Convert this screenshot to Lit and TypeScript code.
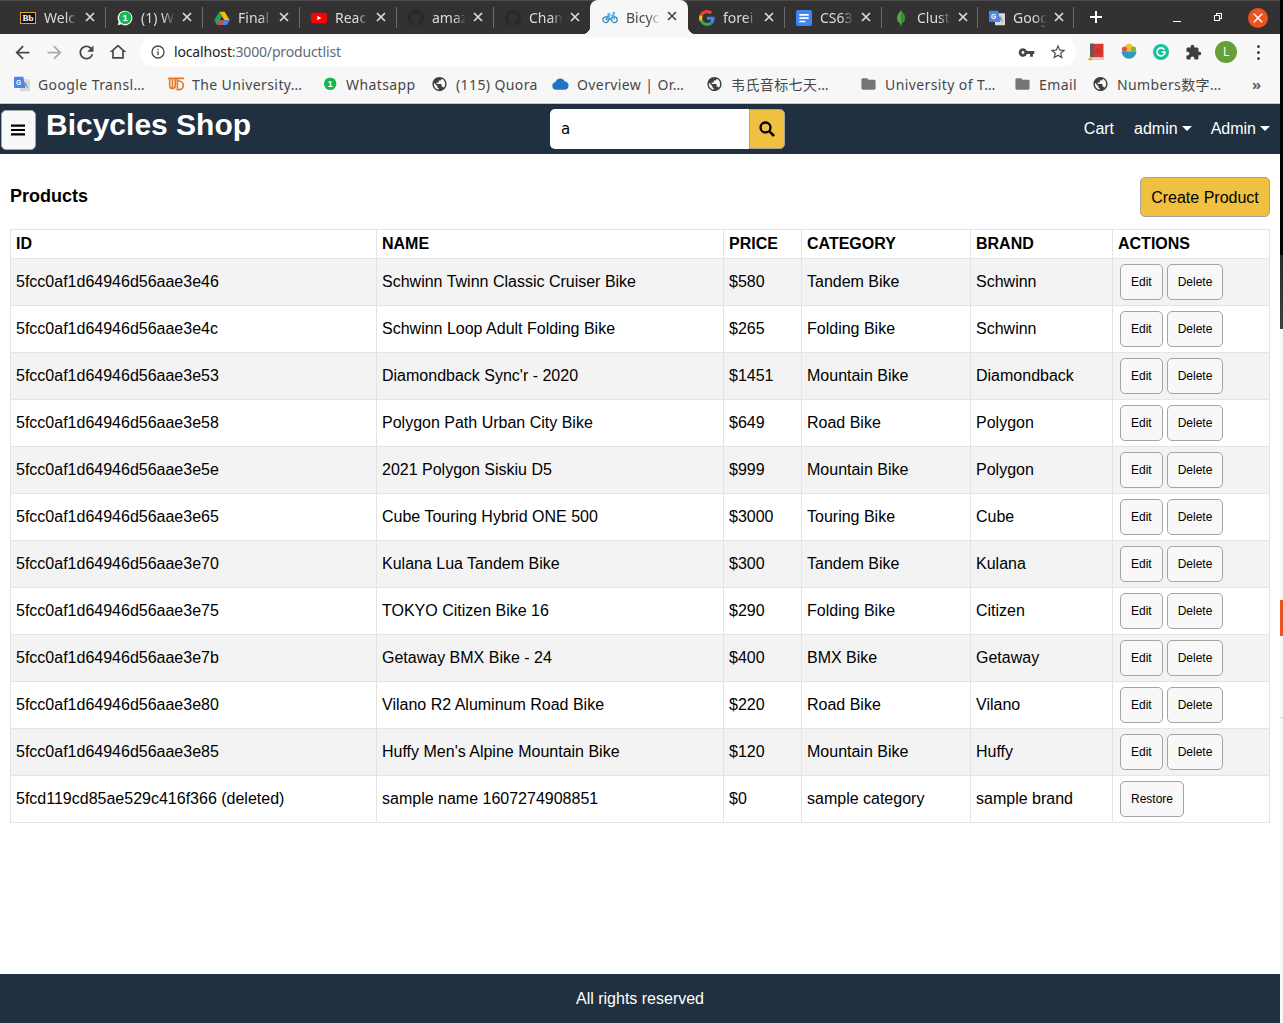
import { LitElement, css, html, svg } from 'lit';
import { customElement } from 'lit/decorators.js';

const GLOBE = 'M12 2C6.48 2 2 6.48 2 12s4.48 10 10 10 10-4.48 10-10S17.52 2 12 2zm-1 17.93c-3.95-.49-7-3.85-7-7.93 0-.62.08-1.21.21-1.79L9 15v1c0 1.1.9 2 2 2v1.93zm6.9-2.54c-.26-.81-1-1.39-1.9-1.39h-1v-3c0-.55-.45-1-1-1H8v-2h2c.55 0 1-.45 1-1V7h2c1.1 0 2-.9 2-2v-.41c2.93 1.19 5 4.06 5 7.41 0 2.08-.8 3.97-2.1 5.39z';
const GITHUB = 'M12 .3a12 12 0 0 0-3.8 23.38c.6.11.82-.26.82-.58v-2.03c-3.34.72-4.04-1.61-4.04-1.61-.55-1.39-1.34-1.76-1.34-1.76-1.09-.74.08-.73.08-.73 1.2.09 1.84 1.24 1.84 1.24 1.07 1.83 2.81 1.3 3.5 1 .1-.78.42-1.31.76-1.61-2.67-.3-5.47-1.33-5.47-5.93 0-1.31.47-2.38 1.24-3.22-.14-.3-.54-1.52.1-3.18 0 0 1-.32 3.3 1.23a11.5 11.5 0 0 1 6 0c2.28-1.55 3.29-1.23 3.29-1.23.64 1.66.24 2.88.12 3.18a4.65 4.65 0 0 1 1.23 3.22c0 4.61-2.8 5.63-5.48 5.92.42.36.81 1.1.81 2.22v3.29c0 .32.22.7.82.58A12 12 0 0 0 12 .3z';

const icon = (body: unknown, size = 16, box = 24) =>
  html`<svg width=${size} height=${size} viewBox="0 0 ${box} ${box}">${body}</svg>`;

const whatsappIcon = (size: number) => icon(svg`
  <path d="M12 1a11 11 0 0 0-9.4 16.7L1 23l5.5-1.5A11 11 0 1 0 12 1z" fill="#fff"/>
  <circle cx="12.3" cy="11.7" r="9.4" fill="#12b94c"/>
  <text x="12.3" y="16.6" font-size="14" font-weight="700" text-anchor="middle" fill="#fff" font-family="Liberation Sans">1</text>`, size);

const translateIcon = () => icon(svg`
  <rect x="9" y="5" width="15" height="18" rx="1" fill="#d9d9d9"/>
  <path d="M16.5 10.5l1.6 4.2h-3.2zM12.5 18l3-7.6h2l3 7.6" fill="none" stroke="#8a8f98" stroke-width="1.4"/>
  <path d="M2 1h12l3 17H2a2 2 0 0 1-2-2V3a2 2 0 0 1 2-2z" fill="#4a86e8"/>
  <text x="7" y="13" font-size="10" font-weight="700" text-anchor="middle" fill="#fff" font-family="Liberation Sans">G</text>`);

const tabIcons: Record<string, () => unknown> = {
  bb: () => html`<span class="bb">Bb</span>`,
  whatsapp: () => whatsappIcon(16),
  drive: () => icon(svg`
    <path d="M8 2.5h8l7.5 13h-8z" fill="#fbbc04"/>
    <path d="M8 2.5 .5 15.5l4 7 7.5-13z" fill="#1fa463"/>
    <path d="M4.5 22.500h15l4-7h-15z" fill="#4285f4"/>
    <path d="M8.500 15.500h7l-3.500 7h-7.500z" fill="#ea4335" opacity=".9"/>`),
  youtube: () => icon(svg`
    <rect x="0" y="4" width="24" height="16" rx="4" fill="#f00"/>
    <path d="M9.500 8.500v7l6-3.500z" fill="#fff"/>`),
  github: () => icon(svg`<path d=${GITHUB} fill="#24292e"/>`),
  bike: () => icon(svg`
    <g fill="none" stroke="#3a7fb0" stroke-width="1.800">
      <circle cx="5.500" cy="16" r="4.300"/>
      <circle cx="18.500" cy="16" r="4.300"/>
    </g>
    <path d="M5.500 16 9.500 9h8l1 7M9.500 9l3 7h-7M12.500 16l5-7M16 5.500h2.500l-1 3.500M8 7h3.500" fill="none" stroke="#35a7ea" stroke-width="1.800"/>`),
  google: () => icon(svg`
    <path d="M23.500 12.300c0-.9-.1-1.600-.2-2.300H12v4.500h6.500c-.3 1.500-1.100 2.700-2.400 3.600l3.700 2.900c2.200-2 3.700-5 3.700-8.700z" fill="#4285f4"/>
    <path d="M12 24c3.200 0 6-1.100 7.900-2.900l-3.700-2.900c-1 .7-2.400 1.200-4.200 1.200-3.100 0-5.800-2.100-6.700-5l-3.900 3C3.400 21.300 7.400 24 12 24z" fill="#34a853"/>
    <path d="M5.300 14.400A7.300 7.300 0 0 1 5.300 9.600l-3.900-3a12 12 0 0 0 0 10.800z" fill="#fbbc05"/>
    <path d="M12 4.700c1.800 0 3.300.6 4.600 1.800L20 3.100C18 1.200 15.200 0 12 0 7.400 0 3.400 2.700 1.400 6.600l3.900 3c.9-2.800 3.600-4.900 6.700-4.900z" fill="#ea4335"/>`),
  docs: () => icon(svg`
    <rect x="0" y="0" width="24" height="24" rx="3" fill="#4285f4"/>
    <path d="M5 6h14v2.500H5zM5 11h14v2.500H5zM5 16h9v2.500H5z" fill="#fff"/>`),
  mongo: () => icon(svg`
    <path d="M12 0c-1 3-6 6.500-6 12 0 5 3.500 7.500 5 8.500l.5 3.500h1l.500-3.500c1.500-1 5-3.500 5-8.500 0-5.500-5-9-6-12z" fill="#4faa41"/>
    <path d="M12 0v24h.5l.5-3.500c1.500-1 5-3.500 5-8.500 0-5.500-5-9-6-12z" fill="#3d8b37"/>`),
  translate: translateIcon,
};

const TABS = [
  { icon: 'bb', title: 'Welc' },
  { icon: 'whatsapp', title: '(1) W' },
  { icon: 'drive', title: 'Final' },
  { icon: 'youtube', title: 'Reac' },
  { icon: 'github', title: 'amaz' },
  { icon: 'github', title: 'Chan' },
  { icon: 'bike', title: 'Bicyc', active: true },
  { icon: 'google', title: 'forei' },
  { icon: 'docs', title: 'CS63' },
  { icon: 'mongo', title: 'Clust', narrow: true },
  { icon: 'translate', title: 'Goog', narrow: true },
];

const globeIcon = () => icon(svg`<path d=${GLOBE} fill="#3c4043"/>`, 18);
const folderIcon = () => icon(svg`<path d="M10 4H4c-1.100 0-2 .9-2 2v12c0 1.100.9 2 2 2h16c1.100 0 2-.9 2-2V8c0-1.100-.9-2-2-2h-8l-2-2z" fill="#757575"/>`, 18);

const BOOKMARKS = [
  { width: 154, title: 'Google Transl…', icon: translateIcon },
  { width: 154, title: 'The University…', icon: () => icon(svg`
    <g fill="none" stroke="#e87722" stroke-width="2.400">
      <path d="M0 3.500h24M2.500 3.500v11a4.200 4.200 0 0 0 8.400 0v-11M6.700 3.500v14M14 3.500v17h2.500a6.500 6.500 0 0 0 0-13H14"/>
    </g>`) },
  { width: 110, title: 'Whatsapp', icon: () => whatsappIcon(16) },
  { width: 121, title: '(115) Quora', icon: globeIcon },
  { width: 154, title: 'Overview | Or…', icon: () => icon(svg`
    <path d="M6 20a5.500 5.500 0 0 1-1-10.900A7 7 0 0 1 18 8.500 5.800 5.800 0 0 1 18.500 20z" fill="#2173c4"/>`, 18) },
  { width: 154, title: '韦氏音标七天…', icon: globeIcon },
  { width: 154, title: 'University of T…', icon: folderIcon },
  { width: 78, title: 'Email', icon: folderIcon },
  { width: 154, title: 'Numbers数字…', icon: globeIcon },
];

const EXTENSIONS = [
  icon(svg`
    <rect x="4" y="1" width="18" height="21" fill="#d93a2f"/>
    <rect x="4" y="1" width="5" height="21" fill="#5d5d5d"/>
    <rect x="4" y="19" width="18" height="3" fill="#f3d6d2"/>
    <rect x="2" y="20" width="4" height="3" fill="#e8a317"/>
    <text x="14" y="14" font-size="12" text-anchor="middle" fill="#a82a20" font-family="Liberation Sans">A</text>`, 18),
  icon(svg`
    <path d="M2 11h20a10 10 0 0 1-20 0z" fill="#2f9bc1"/>
    <circle cx="12" cy="6" r="5" fill="#f4c430"/>
    <circle cx="6" cy="8" r="3.500" fill="#d9534f"/>
    <circle cx="18" cy="8" r="3.500" fill="#7cb342"/>`, 18),
  icon(svg`
    <circle cx="12" cy="12" r="12" fill="#15c39a"/>
    <path d="M17 8.500A6 6 0 1 0 18 12h-5" fill="none" stroke="#fff" stroke-width="2.400"/>`, 16),
  icon(svg`<path d="M20.500 11H19V7c0-1.100-.9-2-2-2h-4V3.500a2.500 2.500 0 0 0-5 0V5H4c-1.100 0-1.990.9-1.990 2v3.800H3.500c1.490 0 2.700 1.210 2.700 2.700s-1.210 2.700-2.700 2.700H2V20c0 1.100.9 2 2 2h3.800v-1.500c0-1.490 1.210-2.700 2.700-2.700 1.490 0 2.700 1.210 2.700 2.700V22H17c1.100 0 2-.9 2-2v-4h1.500a2.500 2.500 0 0 0 0-5z" fill="#3c4043"/>`, 17),
];

const COLUMNS = [
  { label: 'ID', width: 366 },
  { label: 'NAME', width: 347 },
  { label: 'PRICE', width: 78 },
  { label: 'CATEGORY', width: 169 },
  { label: 'BRAND', width: 142 },
  { label: 'ACTIONS', width: 157 },
];

const PRODUCTS = [
  ['5fcc0af1d64946d56aae3e46', 'Schwinn Twinn Classic Cruiser Bike', '$580', 'Tandem Bike', 'Schwinn'],
  ['5fcc0af1d64946d56aae3e4c', 'Schwinn Loop Adult Folding Bike', '$265', 'Folding Bike', 'Schwinn'],
  ['5fcc0af1d64946d56aae3e53', "Diamondback Sync'r - 2020", '$1451', 'Mountain Bike', 'Diamondback'],
  ['5fcc0af1d64946d56aae3e58', 'Polygon Path Urban City Bike', '$649', 'Road Bike', 'Polygon'],
  ['5fcc0af1d64946d56aae3e5e', '2021 Polygon Siskiu D5', '$999', 'Mountain Bike', 'Polygon'],
  ['5fcc0af1d64946d56aae3e65', 'Cube Touring Hybrid ONE 500', '$3000', 'Touring Bike', 'Cube'],
  ['5fcc0af1d64946d56aae3e70', 'Kulana Lua Tandem Bike', '$300', 'Tandem Bike', 'Kulana'],
  ['5fcc0af1d64946d56aae3e75', 'TOKYO Citizen Bike 16', '$290', 'Folding Bike', 'Citizen'],
  ['5fcc0af1d64946d56aae3e7b', 'Getaway BMX Bike - 24', '$400', 'BMX Bike', 'Getaway'],
  ['5fcc0af1d64946d56aae3e80', 'Vilano R2 Aluminum Road Bike', '$220', 'Road Bike', 'Vilano'],
  ['5fcc0af1d64946d56aae3e85', "Huffy Men's Alpine Mountain Bike", '$120', 'Mountain Bike', 'Huffy'],
  ['5fcd119cd85ae529c416f366 (deleted)', 'sample name 1607274908851', '$0', 'sample category', 'sample brand'],
];

@customElement('app-root')
export class AppRoot extends LitElement {
  private renderTabs() {
    return TABS.map((tab, i) => {
      const nextActive = TABS[i + 1] && TABS[i + 1].active;
      const noSep = tab.active || nextActive;
      return html`
        <div class="tab ${tab.active ? 'active' : ''} ${noSep ? 'no-sep' : ''} ${tab.narrow ? 'narrow' : ''}">
          <span class="tab-icon">${tabIcons[tab.icon]()}</span>
          <span class="tab-title">${tab.title}</span>
          <svg class="tab-close" width="10" height="10" viewBox="0 0 10 10">
            <path d="M1 1l8 8M9 1L1 9" stroke="currentColor" stroke-width="1.700" fill="none"/>
          </svg>
        </div>
      `;
    });
  }

  private renderChrome() {
    return html`
      <div class="tabstrip">
        ${this.renderTabs()}
        <svg class="new-tab" width="12" height="12" viewBox="0 0 12 12">
          <path d="M6 0v12M0 6h12" stroke="#fff" stroke-width="2"/>
        </svg>
        <div class="win-btns">
          <span class="win-min"></span>
          <span class="win-max"></span>
          <span class="win-close">
            <svg width="10" height="10" viewBox="0 0 10 10">
              <path d="M.8.8l8.400 8.400M9.200.8L.8 9.200" stroke="#fff" stroke-width="1.500"/>
            </svg>
          </span>
        </div>
      </div>
      <div class="toolbar">
        <span class="nav-btn">${icon(svg`<path d="M20 11H7.830l5.590-5.590L12 4l-8 8 8 8 1.410-1.410L7.830 13H20v-2z" fill="#45474a"/>`, 21)}</span>
        <span class="nav-btn">${icon(svg`<path d="M12 4l-1.410 1.410L16.170 11H4v2h12.170l-5.580 5.590L12 20l8-8z" fill="#a9abad"/>`, 21)}</span>
        <span class="nav-btn">${icon(svg`<path d="M17.650 6.350A7.958 7.958 0 0 0 12 4c-4.420 0-7.990 3.580-7.990 8s3.570 8 7.990 8c3.730 0 6.840-2.550 7.730-6h-2.080A5.990 5.990 0 0 1 12 18c-3.310 0-6-2.690-6-6s2.690-6 6-6c1.660 0 3.140.69 4.220 1.780L13 11h7V4l-2.350 2.350z" fill="#45474a"/>`, 21)}</span>
        <span class="nav-btn">${icon(svg`<path fill-rule="evenodd" d="M12 5.690l5 4.500V18H7v-7.810zM12 3 2 12h3v8h14v-8h3z" fill="#45474a"/>`, 20)}</span>
        <div class="omnibox">
          ${icon(svg`<path fill-rule="evenodd" d="M12 2a10 10 0 1 0 0 20 10 10 0 0 0 0-20zm0 18a8 8 0 1 1 0-16 8 8 0 0 1 0 16zM11 7h2v2h-2zm0 4h2v6h-2z" fill="#45474a"/>`, 16)}
          <span class="url"><b>localhost</b>:3000/productlist</span>
          <span class="omni-end">
            ${icon(svg`<path fill-rule="evenodd" d="M12.650 10A6 6 0 1 0 12.650 14H17v4h4v-4h2v-4zM7 14a2 2 0 1 1 0-4 2 2 0 0 1 0 4z" fill="#45474a"/>`, 17)}
            ${icon(svg`<path d="M22 9.240l-7.190-.62L12 2 9.190 8.630 2 9.240l5.460 4.730L5.820 21 12 17.270 18.180 21l-1.630-7.030L22 9.240zM12 15.400l-3.760 2.270 1-4.280-3.320-2.880 4.380-.38L12 6.100l1.710 4.040 4.380.38-3.320 2.880 1 4.280L12 15.400z" fill="#45474a"/>`, 18)}
          </span>
        </div>
        <div class="extensions">
          ${EXTENSIONS.map((e) => html`<span class="ext">${e}</span>`)}
          <span class="ext"><span class="avatar">L</span></span>
          <span class="ext dots"><i></i><i></i><i></i></span>
        </div>
      </div>
      <div class="bookmarks">
        ${BOOKMARKS.map((b) => html`
          <div class="bookmark" style="width:${b.width}px">
            <span class="bm-icon">${b.icon()}</span>
            <span>${b.title}</span>
          </div>
        `)}
        <span class="more">»</span>
      </div>
    `;
  }

  private renderHeader() {
    return html`
      <header class="site-header">
        <button class="menu-btn" aria-label="menu">
          <svg width="14" height="12" viewBox="0 0 14 12">
            <path d="M0 .5h14v2.200H0zM0 4.900h14v2.200H0zM0 9.300h14v2.200H0z" fill="#000"/>
          </svg>
        </button>
        <a class="brand">Bicycles Shop</a>
        <div class="search">
          <span class="search-input">a</span>
          <button class="search-btn" aria-label="search">
            <svg width="16" height="16" viewBox="0 0 16 16">
              <circle cx="6.500" cy="6.500" r="5" fill="none" stroke="#000" stroke-width="2.300"/>
              <path d="M10.200 10.200 15 15" stroke="#000" stroke-width="2.600"/>
            </svg>
          </button>
        </div>
        <nav class="links">
          <a class="cart">Cart</a>
          <a>admin<i class="caret"></i></a>
          <a>Admin<i class="caret"></i></a>
        </nav>
      </header>
    `;
  }

  private renderTable() {
    return html`
      <table>
        <colgroup>
          ${COLUMNS.map((c) => html`<col style="width:${c.width}px" />`)}
        </colgroup>
        <thead>
          <tr>${COLUMNS.map((c) => html`<th>${c.label}</th>`)}</tr>
        </thead>
        <tbody>
          ${PRODUCTS.map((row) => {
            const deleted = row[0].endsWith('(deleted)');
            return html`
              <tr>
                ${row.map((cell) => html`<td>${cell}</td>`)}
                <td>
                  <div class="actions">
                    ${deleted
                      ? html`<button class="small">Restore</button>`
                      : html`<button class="small">Edit</button><button class="small">Delete</button>`}
                  </div>
                </td>
              </tr>
            `;
          })}
        </tbody>
      </table>
    `;
  }

  render() {
    return html`
      <div class="page">
        ${this.renderChrome()}
        ${this.renderHeader()}
        <main>
          <div class="title-row">
            <h1>Products</h1>
            <button class="primary">Create Product</button>
          </div>
          ${this.renderTable()}
        </main>
        <footer>All rights reserved</footer>
      </div>
      <aside class="side-strip">
        <span class="strip-black"></span>
        <span class="strip-grey"></span>
        <span class="strip-light-a"></span>
        <span class="strip-orange"></span>
        <span class="strip-light-b"></span>
        <span class="strip-line"></span>
      </aside>
    `;
  }

  static styles = css`
    :host {
      display: flex;
      min-height: 1023px;
      background: #fff;
      font-family: 'Liberation Sans', Arial, sans-serif;
      font-size: 16px;
      color: #000;
    }
    .page {
      width: 1280px;
      display: flex;
      flex-direction: column;
      min-height: 1023px;
    }

    /* right edge of the desktop behind the window */
    .side-strip {
      width: 3px;
      display: flex;
      flex-direction: column;
      background: #f9f9f9;
    }
    .strip-black { height: 255px; background: #000; }
    .strip-grey { height: 74px; background: linear-gradient(#2a2a2a, #3f3f3f); }
    .strip-light-a { height: 271px; }
    .strip-orange { height: 36px; background: #e95420; }
    .strip-light-b { height: 81px; }
    .strip-line { height: 1px; background: #d6d6d6; }

    /* browser tabs */
    .tabstrip {
      height: 34px;
      box-sizing: border-box;
      display: flex;
      align-items: stretch;
      padding-left: 8px;
      background: #333131;
      border-top: 1px solid #4a4a4a;
      font-family: 'Noto Sans', sans-serif;
      font-size: 14px;
    }
    .tab {
      position: relative;
      width: 97px;
      flex: none;
      display: flex;
      align-items: center;
      padding-left: 12px;
      box-sizing: border-box;
      color: #dcdcdc;
    }
    .tab.narrow {
      width: 96px;
    }
    .tab::after {
      content: '';
      position: absolute;
      right: -1px;
      top: 6px;
      height: 21px;
      width: 1px;
      background: #6a6a6a;
    }
    .tab.no-sep::after { display: none; }
    .tab.active {
      background: #f7f7f7;
      color: #45474a;
      border-radius: 8px 8px 0 0;
      margin-top: -1px;
      width: 98px;
      margin-right: -1px;
    }
    .tab.active::before {
      content: '';
      position: absolute;
      left: -8px;
      right: -8px;
      bottom: 0;
      height: 8px;
      background:
        radial-gradient(circle at 0 0, #333131 8px, #f7f7f7 8.5px) left / 8px 8px no-repeat,
        radial-gradient(circle at 100% 0, #333131 8px, #f7f7f7 8.5px) right / 8px 8px no-repeat;
    }
    .tab-icon {
      width: 16px;
      height: 16px;
      flex: none;
      display: flex;
      align-items: center;
      justify-content: center;
    }
    .tab-title {
      margin-left: 8px;
      width: 34px;
      white-space: nowrap;
      -webkit-mask-image: linear-gradient(90deg, #000 65%, transparent);
      mask-image: linear-gradient(90deg, #000 65%, transparent);
    }
    .tab-close {
      position: absolute;
      left: 77px;
      top: 11px;
    }
    .bb {
      width: 16px;
      height: 12px;
      box-sizing: border-box;
      border: 1px solid #e0a526;
      background: #111;
      color: #fff;
      font: 700 9px/10px 'Liberation Serif', serif;
      text-align: center;
    }
    .new-tab {
      margin: 10px 0 0 17px;
    }
    .win-btns {
      display: flex;
      align-items: center;
      margin-left: 71px;
    }
    .win-min {
      width: 8px;
      height: 1px;
      background: #fff;
      margin-top: 7px;
    }
    .win-max {
      width: 4px;
      height: 4px;
      border: 1px solid #fff;
      margin-left: 33px;
      margin-right: 1px;
      box-shadow: 2px -2px 0 -1px #333131, 2px -2px 0 0 #fff;
    }
    .win-close {
      width: 20px;
      height: 20px;
      border-radius: 50%;
      background: #e95420;
      margin-left: 27px;
      display: flex;
      align-items: center;
      justify-content: center;
    }

    /* address bar */
    .toolbar {
      height: 32px;
      display: flex;
      align-items: flex-start;
      padding: 4px 0 0 6px;
      box-sizing: border-box;
      background: #f8f8f8;
    }
    .nav-btn {
      width: 32px;
      height: 28px;
      display: flex;
      align-items: center;
      justify-content: center;
    }
    .omnibox {
      width: 936px;
      height: 28px;
      margin-left: 6px;
      padding: 0 9px 0 10px;
      box-sizing: border-box;
      display: flex;
      align-items: center;
      background: #fff;
      border-radius: 14px;
      font-family: 'Noto Sans', sans-serif;
      font-size: 14px;
      color: #5f6b7a;
    }
    .url {
      margin-left: 8px;
      padding-bottom: 2px;
      letter-spacing: -0.15px;
    }
    .url b {
      font-weight: 400;
      color: #202124;
    }
    .omni-end {
      margin-left: auto;
      display: flex;
      align-items: center;
      gap: 14px;
    }
    .extensions {
      display: flex;
      margin-left: 4px;
    }
    .ext {
      width: 32.5px;
      height: 28px;
      display: flex;
      align-items: center;
      justify-content: center;
    }
    .avatar {
      width: 22px;
      height: 22px;
      border-radius: 50%;
      background: #689f38;
      color: #fff;
      font: 12px/22px 'Noto Sans', sans-serif;
      text-align: center;
    }
    .dots {
      flex-direction: column;
      gap: 3px;
    }
    .dots i {
      width: 3px;
      height: 3px;
      border-radius: 50%;
      background: #45474a;
    }

    /* bookmarks */
    .bookmarks {
      height: 38px;
      box-sizing: border-box;
      display: flex;
      align-items: center;
      padding: 0 0 1px 13px;
      background: #f7f7f7;
      border-bottom: 1px solid #c4c4c4;
      font-family: 'Noto Sans', 'Noto Sans CJK SC', sans-serif;
      font-size: 14px;
      letter-spacing: 0.4px;
      color: #45474a;
    }
    .bookmark {
      flex: none;
      display: flex;
      align-items: center;
      gap: 8px;
      white-space: nowrap;
    }
    .bm-icon {
      width: 17px;
      height: 18px;
      display: flex;
      align-items: center;
      justify-content: center;
    }
    .more {
      margin-left: 6px;
      font-size: 15px;
      font-weight: 700;
      color: #5f6368;
    }

    /* site header */
    .site-header {
      height: 50px;
      flex: none;
      display: flex;
      align-items: flex-start;
      background: #203040;
      color: #fff;
    }
    .menu-btn {
      width: 35px;
      height: 40px;
      margin: 6px 0 0 1px;
      padding: 0 1px 0 0;
      background: #f8f8f8;
      border: 1px solid #a4a4a4;
      border-radius: 5px;
      display: flex;
      align-items: center;
      justify-content: center;
    }
    .brand {
      width: 504px;
      margin-left: 10px;
      font-size: 30px;
      font-weight: 700;
      line-height: 42px;
      box-sizing: border-box;
    }
    .search {
      display: flex;
      height: 40px;
      width: 235px;
      margin-top: 5px;
    }
    .search-input {
      flex: 1;
      box-sizing: border-box;
      background: #fff;
      border-radius: 5px 0 0 5px;
      padding-left: 11px;
      line-height: 40px;
      color: #000;
      font-family: 'DejaVu Sans', sans-serif;
      font-size: 15px;
    }
    .search-btn {
      width: 36px;
      box-sizing: border-box;
      padding: 0;
      background: #f0c040;
      border: 1px solid #a4a4a4;
      border-radius: 0 5px 5px 0;
      display: flex;
      align-items: center;
      justify-content: center;
    }
    .links {
      flex: 1;
      display: flex;
      justify-content: flex-end;
      gap: 19px;
      padding: 16px 10px 0 0;
      line-height: 18px;
    }
    .cart {
      margin-right: 1px;
    }
    .caret {
      display: inline-block;
      margin-left: 4px;
      vertical-align: 3px;
      border-top: 5px solid #fff;
      border-left: 5px solid transparent;
      border-right: 5px solid transparent;
    }

    /* page body */
    main {
      flex: 1;
      padding: 23px 10px 0;
    }
    .title-row {
      display: flex;
      align-items: center;
      justify-content: space-between;
      margin-bottom: 12px;
    }
    h1 {
      margin: 0;
      padding-bottom: 2px;
      font-size: 18px;
      line-height: 36px;
    }
    button {
      font-family: inherit;
      color: #000;
    }
    .primary {
      width: 130px;
      height: 40px;
      padding: 2px 0 0;
      background: #f0c040;
      border: 1px solid #a4a4a4;
      border-radius: 5px;
      font-size: 16px;
    }
    table {
      width: 1259px;
      table-layout: fixed;
      border-collapse: collapse;
    }
    th, td {
      padding: 5px;
      border: 1px solid #e4e4e4;
      line-height: 18px;
      text-align: left;
      vertical-align: middle;
      overflow: hidden;
      white-space: nowrap;
    }
    tbody tr:nth-child(odd) {
      background: #f3f3f3;
    }
    .actions {
      display: flex;
      gap: 4px;
      padding-left: 2px;
    }
    .small {
      height: 36px;
      padding: 0 10px;
      background: #f8f8f8;
      border: 1px solid #a4a4a4;
      border-radius: 5px;
      font-size: 12px;
    }
    footer {
      height: 49px;
      flex: none;
      display: flex;
      align-items: center;
      justify-content: center;
      background: #203040;
      color: #fff;
    }
  `;
}

declare global {
  interface HTMLElementTagNameMap {
    'app-root': AppRoot;
  }
}
